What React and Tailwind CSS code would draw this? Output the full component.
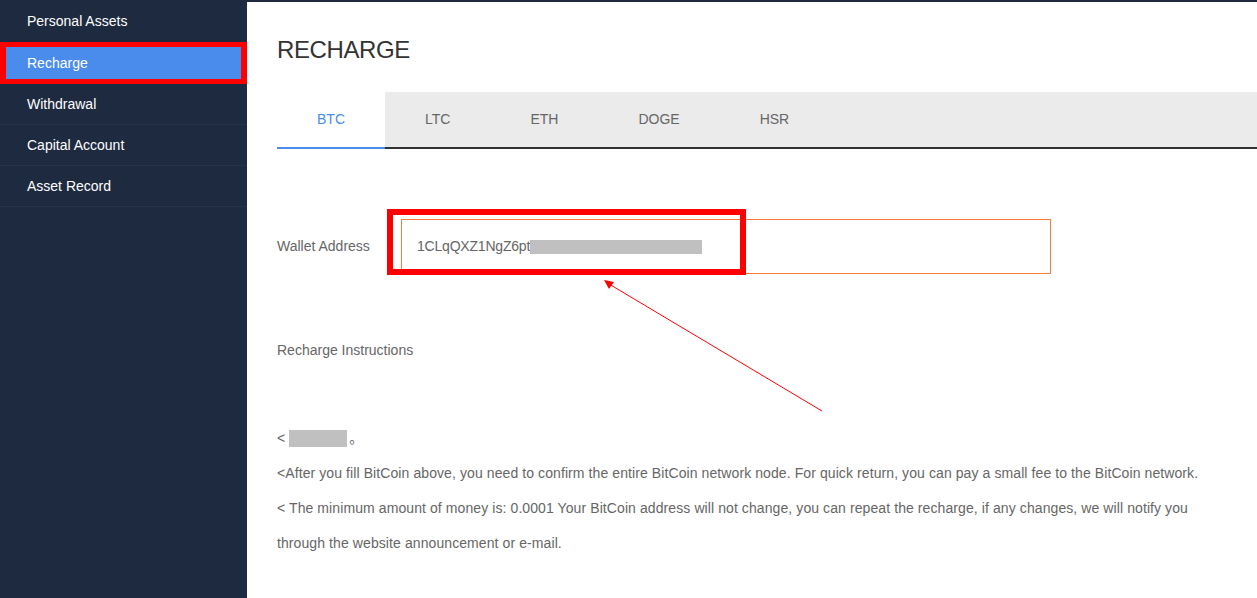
import React from "react";

const menu = ["Personal Assets", "Recharge", "Withdrawal", "Capital Account", "Asset Record"];
const tabs = ["BTC", "LTC", "ETH", "DOGE", "HSR"];

const Sidebar = () => (
  <div className="w-[247px] shrink-0 bg-[#1e2a40] text-white text-[14px]">
    {menu.map((item) => {
      if (item === "Recharge") {
        return (
          <div key={item} className="h-[42px] border-[6px] border-t-[5px] border-b-[5px] border-[#ff0000]">
            <div className="h-full bg-[#4a8cec] pl-[21px] flex items-center">{item}</div>
          </div>
        );
      }
      return (
        <div
          key={item}
          className={
            item === "Personal Assets"
              ? "h-[42px] pl-[27px] flex items-center"
              : "h-[41px] pl-[27px] flex items-center border-b border-[#26324a]"
          }
        >
          {item}
        </div>
      );
    })}
  </div>
);

const Tabs = () => (
  <div className="flex h-[57px] bg-[#ebebeb] border-b-2 border-[#333333]">
    {tabs.map((t, i) => (
      <div
        key={t}
        className={
          i === 0
            ? "px-[40px] w-[108px] flex items-center justify-center bg-white text-[#4a8cec] border-b-2 border-[#4a8cec] -mb-[2px]"
            : "px-[40px] flex items-center justify-center text-[#666666]"
        }
      >
        {t}
      </div>
    ))}
  </div>
);

export default function App() {
  return (
    <div className="flex h-[598px] w-[1257px] font-['Liberation_Sans','Noto_Sans_CJK_SC',sans-serif] relative overflow-hidden">
      <Sidebar />
      <div className="flex-1 bg-white border-t-2 border-[#1e2a40] pl-[30px] pt-[34px] text-[14px] text-[#666666]">
        <h1 className="text-[24px] leading-[28px] tracking-[-0.4px] text-[#333333]">RECHARGE</h1>
        <div className="mt-[28px] text-[14px]">
          <Tabs />
        </div>

        <div className="flex items-center mt-[70px]">
          <div className="w-[124px]">Wallet Address</div>
          <div className="relative w-[650px] h-[55px] border border-[#f87a3f] pl-[15px] flex items-center tracking-[-0.2px]">
            <span>1CLqQXZ1NgZ6pt</span>
            <span className="inline-block w-[172px] h-[14px] bg-[#c0c0c0]"></span>
            <div className="absolute -left-[15px] -top-[11px] w-[359px] h-[66px] border-[6px] border-[#ff0000]"></div>
          </div>
        </div>

        <div className="mt-[68px] leading-[16px]">Recharge Instructions</div>

        <div className="mt-[63px] pr-[30px] leading-[35px] tracking-[0.09px]">
          <p className="flex items-center">
            <span>&lt;</span>
            <span className="inline-block ml-[4px] w-[58px] h-[17px] bg-[#c0c0c0]"></span>
            <span className="ml-[2px]">。</span>
          </p>
          <p>&lt;After you fill BitCoin above, you need to confirm the entire BitCoin network node. For quick return, you can pay a small fee to the BitCoin network.</p>
          <p>&lt; The minimum amount of money is: 0.0001 Your BitCoin address will not change, you can repeat the recharge, if any changes, we will notify you through the website announcement or e-mail.</p>
        </div>
      </div>

      <svg className="absolute left-0 top-0 pointer-events-none" width="1257" height="598">
        <line x1="822" y1="411" x2="609" y2="284" stroke="#ff0000" strokeWidth="1" />
        <polygon points="604,280 614,282 609,289" fill="#ff0000" />
      </svg>
    </div>
  );
}
